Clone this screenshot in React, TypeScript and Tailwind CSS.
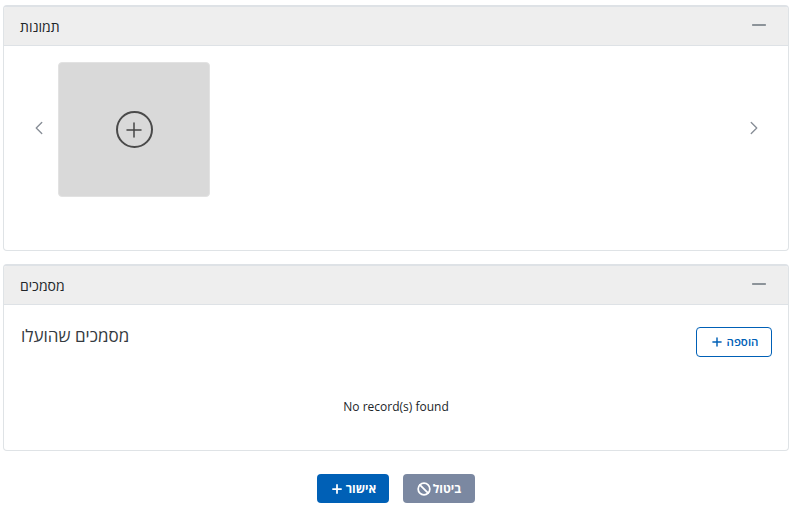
import { ChevronLeft, ChevronRight, Ban, Plus, Minus } from 'lucide-react';
import type { ReactNode } from 'react';

function Panel({ title, className, children }: { title: string; className: string; children: ReactNode }) {
  return (
    <section className={`rounded border border-[#dfe3e6] border-t-2 border-t-[#dee2e6] bg-white overflow-hidden ${className}`}>
      <div className="h-[39px] shrink-0 flex items-center justify-between pl-[16px] pr-[18px] bg-[#eeeeee] border-b border-[#dee2e6]">
        <span dir="rtl" className="text-[14px] text-[#212529]">{title}</span>
        <Minus className="w-[22px] h-[22px] text-[#6c757d] -mt-[2px]" strokeWidth={1.4} />
      </div>
      {children}
    </section>
  );
}

export default function App() {
  return (
    <div className="w-[793px] h-[506px] bg-white pt-[5px] px-[3px] pr-[4px] font-['Open_Sans','Liberation_Sans',sans-serif] overflow-hidden">
      {/* Images */}
      <Panel title="תמונות" className="h-[246px]">
        <div className="flex items-start pl-[24px] pr-[23px] pt-[16px]">
          <div className="h-[131px] flex items-center w-[30px] shrink-0">
            <ChevronLeft className="w-[22px] h-[22px] text-[#8a9099]" strokeWidth={1.5} />
          </div>
          <button className="w-[152px] h-[135px] rounded-[4px] bg-[#d9d9d9] border border-[#e2e2e2] flex items-center justify-center">
            <span className="w-[37px] h-[37px] rounded-full border-2 border-[#4a4a4a] flex items-center justify-center">
              <Plus className="w-[24px] h-[24px] text-[#444444]" strokeWidth={1.5} />
            </span>
          </button>
          <div className="h-[131px] flex items-center justify-end flex-1">
            <ChevronRight className="w-[22px] h-[22px] text-[#8a9099]" strokeWidth={1.5} />
          </div>
        </div>
      </Panel>

      {/* Documents */}
      <Panel title="מסמכים" className="h-[187px] mt-[13px]">
        <div className="flex items-start justify-between pl-[17px] pr-[16px] pt-[22px]">
          <h3 dir="rtl" className="text-[17px] leading-[20px] text-[#343a40] -mt-px">מסמכים שהועלו</h3>
          <button className="w-[76px] h-[30px] rounded-[4px] border border-[#0060b6] bg-white text-[#0060b6] text-[11.5px] font-semibold flex items-center justify-center gap-[3px]">
            <Plus className="w-[14px] h-[14px]" strokeWidth={2.5} />
            <span dir="rtl">הוספה</span>
          </button>
        </div>
        <p className="text-center text-[12px] text-[#212529] mt-[41px]">No record(s) found</p>
      </Panel>

      {/* Actions */}
      <div className="flex justify-center gap-[14px] mt-[23px]">
        <button className="w-[72px] h-[29px] rounded-[4px] bg-[#0060b6] text-white text-[12px] font-bold flex items-center justify-center gap-[2px]">
          <Plus className="w-[14px] h-[14px]" strokeWidth={3} />
          <span dir="rtl">אישור</span>
        </button>
        <button className="w-[72px] h-[29px] rounded-[4px] bg-[#7b88a1] text-white text-[12px] font-bold flex items-center justify-center gap-[2px]">
          <Ban className="w-[14px] h-[14px]" strokeWidth={3} />
          <span dir="rtl">ביטול</span>
        </button>
      </div>
    </div>
  );
}
